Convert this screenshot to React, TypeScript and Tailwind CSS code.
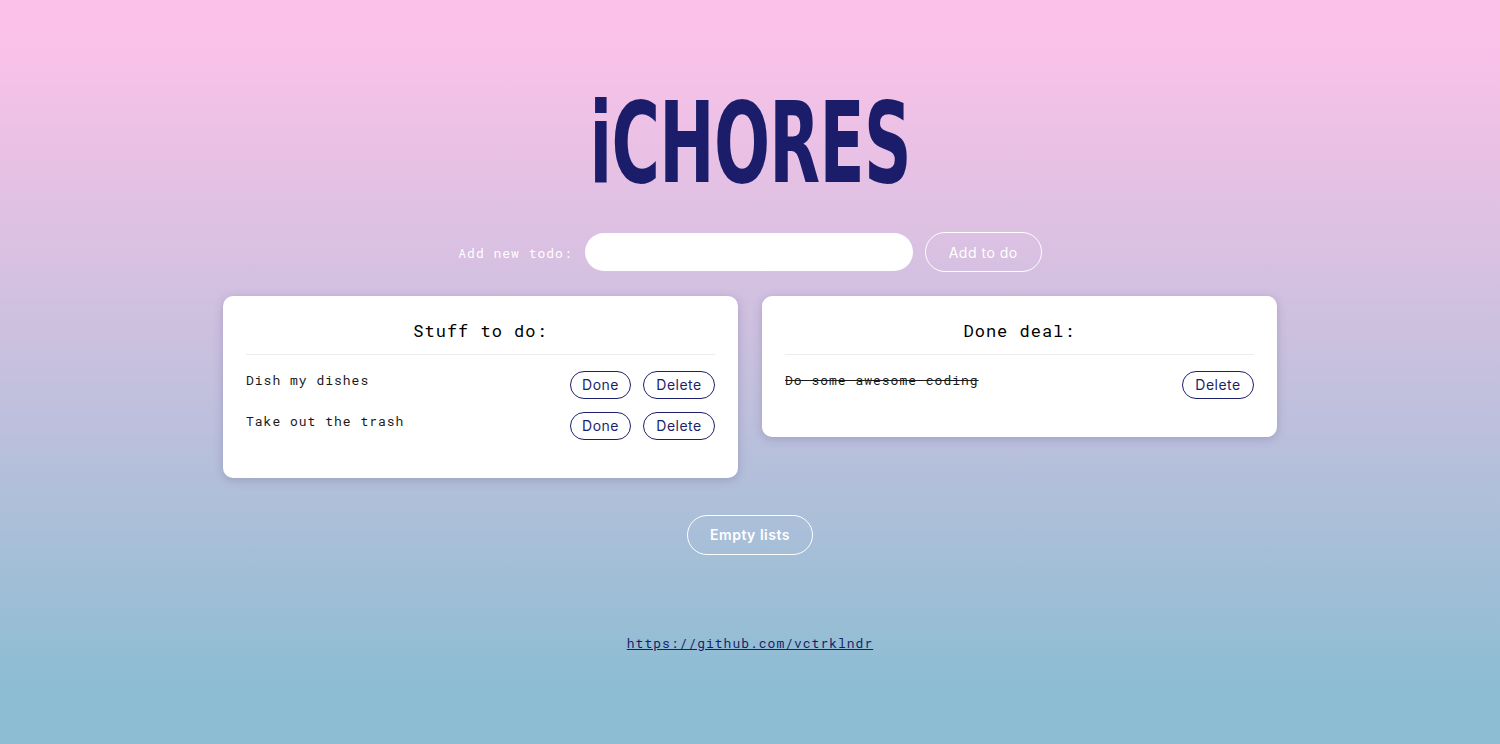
import React, { useState } from "react";

type Todo = { id: number; text: string; done: boolean };

const mono = "font-['Roboto_Mono','DejaVu_Sans_Mono','Liberation_Mono',monospace]";
const sans = "font-['Inter','Roboto','Liberation_Sans',sans-serif]";

const Pill = ({
  children,
  onClick,
  width,
}: {
  children: React.ReactNode;
  onClick?: () => void;
  width: string;
}) => (
  <button
    onClick={onClick}
    className={`${sans} ${width} h-[28px] rounded-full border-[1.5px] border-[#1c1f6b] text-[#1c1f6b] text-[14px] tracking-[0.5px] leading-none bg-white`}
  >
    {children}
  </button>
);

const App = () => {
  const [todos, setTodos] = useState<Todo[]>([
    { id: 1, text: "Dish my dishes", done: false },
    { id: 2, text: "Take out the trash", done: false },
    { id: 3, text: "Do some awesome coding", done: true },
  ]);
  const [input, setInput] = useState<string>("");

  const addTodo = () => {
    if (!input.trim()) return;
    setTodos([...todos, { id: Date.now(), text: input, done: false }]);
    setInput("");
  };

  const open = todos.filter((t) => !t.done);
  const finished = todos.filter((t) => t.done);

  return (
    <div className="min-h-[744px] w-full bg-linear-to-b from-[#fbc1e9] from-5% to-[#8cbdd3] to-92% flex flex-col items-center">
      <h1 className="mt-[80px] h-[126px] flex items-center text-[#1b1d6a] font-['DejaVu_Sans_Condensed','Liberation_Sans_Narrow','Roboto_Condensed',sans-serif] font-bold text-[112px] leading-none tracking-[-1px] scale-x-[0.655]">
        iCHORES
      </h1>

      <div className="mt-[26px] flex items-center">
        <label className={`${mono} mt-[3px] text-white text-[13px] tracking-[1px] mr-3`}>
          Add new todo:
        </label>
        <input
          value={input}
          onChange={(e) => setInput(e.target.value)}
          onKeyDown={(e) => e.key === "Enter" && addTodo()}
          className={`${mono} w-[328px] h-[38px] rounded-[19px] bg-white px-4 text-[13px] outline-none`}
        />
        <button
          onClick={addTodo}
          className={`${sans} ml-3 w-[117px] h-[40px] rounded-full border border-white text-white text-[14px] tracking-[0.5px]`}
        >
          Add to do
        </button>
      </div>

      <div className="mt-[24px] flex items-start gap-6">
        <div className="w-[515px] bg-white rounded-[10px] shadow-[0_2px_10px_rgba(80,60,120,0.25)] px-[23px] pt-[22px] pb-[38px]">
          <h2 className={`${mono} text-center text-[17px] tracking-[1px] text-black`}>
            Stuff to do:
          </h2>
          <hr className="mt-[10px] border-t border-[#ececec]" />
          <ul className="mt-[16px] flex flex-col gap-[13px]">
            {open.map((t) => (
              <li key={t.id} className="flex items-start justify-between">
                <span className={`${mono} text-[13px] tracking-[1px] text-[#1a1a1a]`}>
                  {t.text}
                </span>
                <div className="flex gap-3">
                  <Pill
                    width="w-[61px]"
                    onClick={() =>
                      setTodos(todos.map((x) => (x.id === t.id ? { ...x, done: true } : x)))
                    }
                  >
                    Done
                  </Pill>
                  <Pill width="w-[72px]" onClick={() => setTodos(todos.filter((x) => x.id !== t.id))}>
                    Delete
                  </Pill>
                </div>
              </li>
            ))}
          </ul>
        </div>

        <div className="w-[515px] bg-white rounded-[10px] shadow-[0_2px_10px_rgba(80,60,120,0.25)] px-[23px] pt-[22px] pb-[38px]">
          <h2 className={`${mono} text-center text-[17px] tracking-[1px] text-black`}>
            Done deal:
          </h2>
          <hr className="mt-[10px] border-t border-[#ececec]" />
          <ul className="mt-[16px] flex flex-col gap-[13px]">
            {finished.map((t) => (
              <li key={t.id} className="flex items-start justify-between">
                <span className={`${mono} text-[13px] tracking-[1px] text-[#1a1a1a] line-through`}>
                  {t.text}
                </span>
                <Pill width="w-[72px]" onClick={() => setTodos(todos.filter((x) => x.id !== t.id))}>
                  Delete
                </Pill>
              </li>
            ))}
          </ul>
        </div>
      </div>

      <button
        onClick={() => setTodos([])}
        className={`${sans} mt-[37px] w-[126px] h-[40px] rounded-full border border-white text-white text-[14px] font-semibold tracking-[0.5px]`}
      >
        Empty lists
      </button>

      <a
        href="#"
        className={`${mono} mt-[79px] text-[13px] tracking-[1px] text-[#1b1d6a] underline`}
      >
        https://github.com/vctrklndr
      </a>
    </div>
  );
};

export default App;
